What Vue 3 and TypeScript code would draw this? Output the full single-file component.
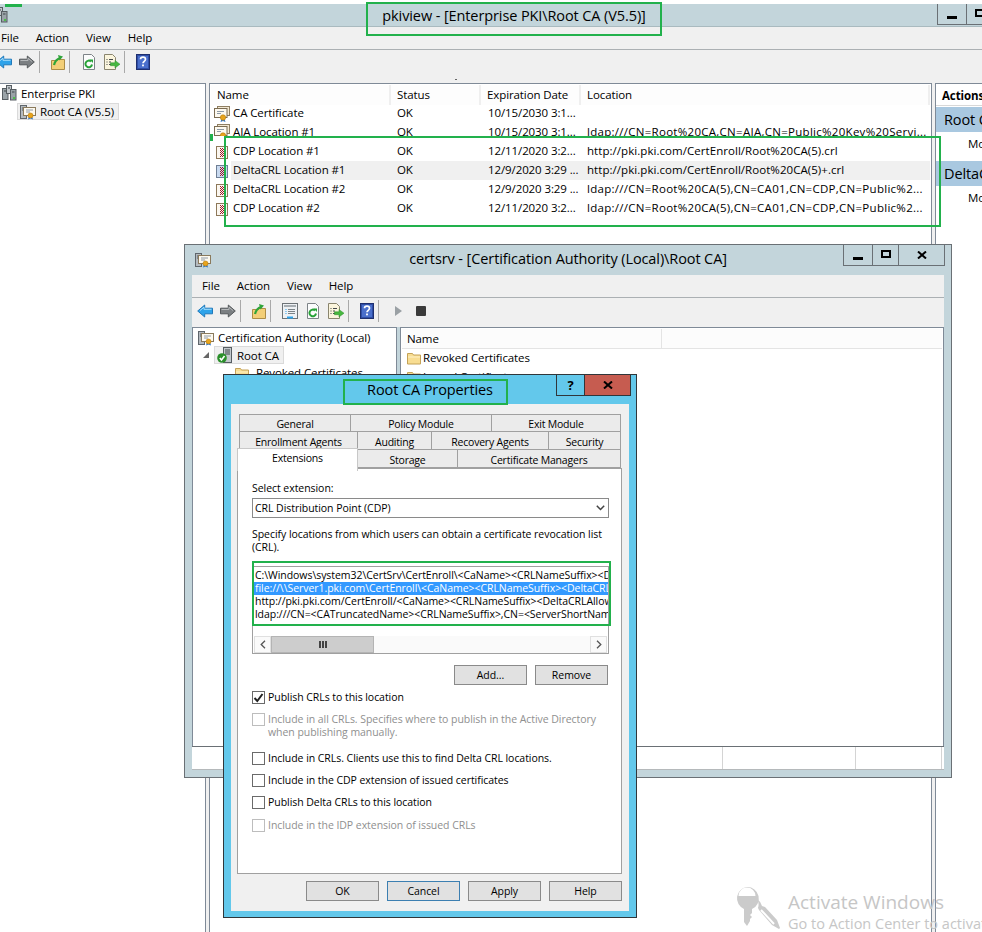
<template>
  <div class="desktop">
    <svg class="defs" width="0" height="0" aria-hidden="true">
      <symbol id="cert" viewBox="0 0 16 16">
        <rect x="3.5" y="0.5" width="12" height="9" fill="#f3e8d2" stroke="#8f7f62" />
        <rect x="0.5" y="2.5" width="12.5" height="9" fill="#fdf9ef" stroke="#7b6c52" />
        <path d="M3 5.5h7M3 7.5h4" stroke="#8e9aa6" />
        <path d="M7.5 13l-1 3 2.5-1 2.5 1-1-3z" fill="#2a74c9" />
        <circle cx="9" cy="11.5" r="2.7" fill="#e8a41c" stroke="#b97c0c" stroke-width="0.6" />
      </symbol>
      <symbol id="crl" viewBox="0 0 16 16">
        <rect x="2.5" y="2.5" width="11" height="12" fill="#fbf7f0" stroke="#8d7859" />
        <path d="M6.500 4v9M7.500 5v8M8.500 4v9M9.500 5v8" stroke="#a01828" stroke-dasharray="1 1" />
      </symbol>
      <symbol id="delta" viewBox="0 0 16 16">
        <rect x="2.5" y="2.5" width="11" height="12" fill="#c9daf0" stroke="#6f7f95" />
        <path d="M6.500 4v9M7.500 5v8M8.500 4v9M9.500 5v8" stroke="#a01828" stroke-dasharray="1 1" />
      </symbol>
      <symbol id="ca" viewBox="0 0 16 16">
        <rect x="0.5" y="1.5" width="6" height="13" fill="#b4babf" stroke="#5f666c" />
        <path d="M2 4h3M2 6h3" stroke="#4f565c" />
        <rect x="3.5" y="3.5" width="12" height="8" fill="#fdf9ef" stroke="#8a7a5c" />
        <path d="M6 6h7M6 8h4" stroke="#8e9aa6" />
        <path d="M9 12l-1 3.5 2.5-1 2.5 1-1-3.500z" fill="#2a74c9" />
        <circle cx="10.500" cy="11.500" r="2.500" fill="#e8a41c" stroke="#b97c0c" stroke-width="0.6" />
      </symbol>
      <symbol id="pki" viewBox="0 0 16 16">
        <rect x="1.500" y="3.500" width="5.500" height="11" fill="#9aa3a8" stroke="#565d62" />
        <rect x="5.500" y="0.500" width="5" height="8" fill="#c2c8cc" stroke="#565d62" />
        <rect x="9.500" y="4.500" width="5.500" height="10.500" fill="#9aa3a8" stroke="#565d62" />
        <path d="M3 6h2.500M11 7h2.500M7 3h2" stroke="#3f464b" />
        <rect x="12" y="12" width="2" height="2" fill="#4bc04b" />
      </symbol>
      <symbol id="ca-ok" viewBox="0 0 16 16">
        <rect x="6.500" y="0.500" width="8" height="15" fill="#c2c8cc" stroke="#565d62" />
        <path d="M8 3h5M8 5h5M8 7h5" stroke="#3f464b" />
        <circle cx="5" cy="11" r="4.800" fill="#2a8f2a" />
        <path d="M2.800 11l1.700 2 3-4" fill="none" stroke="#fff" stroke-width="1.600" />
      </symbol>
      <symbol id="folder" viewBox="0 0 16 16">
        <path d="M1.500 3.500v10.500h13v-9h-7l-1-1.500z" fill="#f8dd92" stroke="#c4a257" />
        <path d="M2 7h12" stroke="#fdf0c6" />
      </symbol>
      <symbol id="back" viewBox="0 0 16 16">
        <path d="M0.700 8l7-6v3.200h7.800v5.600H7.700V14z" fill="#2ea3ea" stroke="#2079ba" stroke-linejoin="round" />
        <path d="M3 7.500l4-3.300v2.100h7.500" fill="none" stroke="#a6dcfa" />
      </symbol>
      <symbol id="forward" viewBox="0 0 16 16">
        <path d="M15.300 8l-7-6v3.200H0.500v5.600h7.800V14z" fill="#7b7f82" stroke="#55595c" stroke-linejoin="round" />
        <path d="M1.500 6.500h7.500V4.200l4 3.300" fill="none" stroke="#b5b8ba" />
      </symbol>
      <symbol id="up" viewBox="0 0 14 16">
        <path d="M0.500 6.500v9h13v-10h-6l-1.500 1z" fill="#f3cf78" stroke="#ad8d47" />
        <path d="M3 11c1-4 3-6 6-7" fill="none" stroke="#2fa53a" stroke-width="2.200" />
        <path d="M7 1l5 1.500-3.500 4z" fill="#2fa53a" />
      </symbol>
      <symbol id="tree" viewBox="0 0 16 16">
        <rect x="0.500" y="0.500" width="15" height="15" fill="#eef1f4" stroke="#6d7377" />
        <rect x="2" y="2" width="12" height="2" fill="#a7adb2" />
        <path d="M3.500 6.500h1M3.500 8.500h1M3.500 10.500h1" stroke="#2ea3ea" />
        <path d="M6 6.500h7M6 8.500h7M6 10.500h7" stroke="#7c8388" />
        <rect x="5" y="13.500" width="6" height="2" fill="#2ea3ea" />
      </symbol>
      <symbol id="refresh" viewBox="0 0 16 16">
        <path d="M2.500 0.500h8l3 3v12h-11z" fill="#fbfcfc" stroke="#7d8387" />
        <path d="M11 10.500a3.300 3.300 0 1 1-1-3" fill="none" stroke="#27a238" stroke-width="2" />
        <path d="M8.500 5.500h3.500v3.500z" fill="#27a238" />
      </symbol>
      <symbol id="export" viewBox="0 0 16 16">
        <path d="M0.500 0.500h8l3 3v12h-11z" fill="#fbf5dd" stroke="#8a856e" />
        <path d="M2.500 5.500h1M5 5.500h4M2.500 8h1M5 8h2M2.500 10.500h1M5 10.500h2" stroke="#44484b" />
        <path d="M6.500 8.800h4.500V6.500l5 3.700-5 3.800v-2.300H6.500z" fill="#48b83f" stroke="#2d8e2c" stroke-width="0.500" />
      </symbol>
      <symbol id="help" viewBox="0 0 14 16">
        <rect x="0.500" y="0.500" width="13" height="15" fill="#2f4ea6" stroke="#1e2f70" />
        <rect x="2" y="2" width="10" height="12" fill="#4a6fcc" />
        <path d="M4.500 5.300c0-3 5-3 5 0 0 2-2.500 2-2.500 4" fill="none" stroke="#fff" stroke-width="1.700" />
        <rect x="6.100" y="10.500" width="1.800" height="1.800" fill="#fff" />
      </symbol>
      <symbol id="close" viewBox="0 0 10 8">
        <path d="M1 0.500l8 7M9 0.500l-8 7" stroke="#000" stroke-width="2" />
      </symbol>
    </svg>

    <!-- back window -->
    <section class="win win-pki">
      <header class="titlebar">
        <svg class="ic pki-win-icon"><use href="#pki" /></svg>
        <span class="title">pkiview - [Enterprise PKI\Root CA (V5.5)]</span>
        <div class="caption">
          <span class="cap cap-min"><i class="glyph-min"></i></span>
          <span class="cap cap-max"><i class="glyph-max"></i></span>
          <span class="cap cap-x"><svg width="10" height="8"><use href="#close" /></svg></span>
        </div>
      </header>
      <nav class="menubar">
        <span v-for="m in menus" :key="m">{{ m }}</span>
      </nav>
      <div class="toolbar">
        <div class="tb-group">
          <svg class="ic"><use href="#back" /></svg>
          <svg class="ic"><use href="#forward" /></svg>
        </div>
        <i class="tb-sep"></i>
        <svg class="ic-n"><use href="#up" /></svg>
        <i class="tb-sep"></i>
        <div class="tb-group">
          <svg class="ic"><use href="#refresh" /></svg>
          <svg class="ic"><use href="#export" /></svg>
        </div>
        <i class="tb-sep"></i>
        <svg class="ic-n"><use href="#help" /></svg>
      </div>
      <div class="panes">
        <div class="pane pki-tree">
          <div class="tree-row">
            <svg class="ic"><use href="#pki" /></svg>
            <span>Enterprise PKI</span>
          </div>
          <div class="tree-row tree-child">
            <span class="selected">
              <svg class="ic"><use href="#ca" /></svg>
              <span>Root CA (V5.5)</span>
            </span>
          </div>
        </div>
        <div class="pane pki-list">
          <div class="list-head">
            <span v-for="h in pkiColumns" :key="h">{{ h }}</span>
          </div>
          <div
            v-for="row in pkiRows"
            :key="row.name"
            class="list-row"
            :class="{ 'row-cut': row.cut, 'row-hi': row.hi }"
          >
            <svg class="ic"><use :href="'#' + row.icon" /></svg>
            <div class="list-cells">
              <span>{{ row.name }}</span>
              <span>OK</span>
              <span>{{ row.date }}</span>
              <span class="cell-loc" :class="{ 'cell-ldap': row.location.startsWith('ldap') }">{{ row.location }}</span>
            </div>
          </div>
        </div>
        <div class="pane pki-actions">
          <div class="actions-title">Actions</div>
          <div class="actions-group">Root CA (V5.5)</div>
          <div class="actions-item">More Actions</div>
          <div class="actions-group">DeltaCRL Location #1</div>
          <div class="actions-item">More Actions</div>
        </div>
      </div>
    </section>

    <i class="mark-dash"></i>
    <i class="mark-tick"></i>
    <i class="speck"></i>
    <div class="mark mark-title"></div>
    <div class="mark mark-rows"></div>

    <div class="activation">
      <svg class="key" width="46" height="46" viewBox="0 0 46 46">
        <path d="M12 1a11.500 11.500 0 0 1 5 22v4l-2 2 2 2-2 2v2l-3 5-3-4V23A11.500 11.500 0 0 1 12 1z" fill="#cbcbcb" />
        <path d="M3.500 10a8.500 8.500 0 0 1 17 0z" fill="#fff" />
        <path d="M22 13a11 11 0 0 1 1 9l1 2 13 15 7 4 1-1-3-8-12-13-3-1a12 12 0 0 0-5-7z" fill="#cbcbcb" />
        <path d="M26 24l13 14" stroke="#fff" stroke-width="2" />
      </svg>
      <div>
        <div class="act-big">Activate Windows</div>
        <div class="act-small">Go to Action Center to activate Windows.</div>
      </div>
    </div>

    <!-- certsrv console -->
    <section class="win win-cert">
      <header class="titlebar">
        <svg class="ic win-icon"><use href="#ca" /></svg>
        <span class="title">certsrv - [Certification Authority (Local)\Root CA]</span>
        <div class="caption">
          <span class="cap cap-min"><i class="glyph-min"></i></span>
          <span class="cap cap-max"><i class="glyph-max"></i></span>
          <span class="cap cap-x"><svg width="10" height="8"><use href="#close" /></svg></span>
        </div>
      </header>
      <nav class="menubar">
        <span v-for="m in menus" :key="m">{{ m }}</span>
      </nav>
      <div class="toolbar">
        <div class="tb-group">
          <svg class="ic"><use href="#back" /></svg>
          <svg class="ic"><use href="#forward" /></svg>
        </div>
        <i class="tb-sep"></i>
        <svg class="ic-n"><use href="#up" /></svg>
        <i class="tb-sep"></i>
        <div class="tb-group">
          <svg class="ic"><use href="#tree" /></svg>
          <svg class="ic"><use href="#refresh" /></svg>
          <svg class="ic"><use href="#export" /></svg>
        </div>
        <i class="tb-sep"></i>
        <svg class="ic-n"><use href="#help" /></svg>
        <i class="tb-sep"></i>
        <i class="play"></i>
        <i class="stop"></i>
      </div>
      <div class="panes">
        <div class="pane cert-tree">
          <div class="tree-row">
            <svg class="ic"><use href="#ca" /></svg>
            <span>Certification Authority (Local)</span>
          </div>
          <div class="tree-row tree-root">
            <i class="expander"></i>
            <span class="selected">
              <svg class="ic"><use href="#ca-ok" /></svg>
              <span>Root CA</span>
            </span>
          </div>
          <div class="tree-row tree-leaf">
            <svg class="ic"><use href="#folder" /></svg>
            <span>Revoked Certificates</span>
          </div>
        </div>
        <div class="pane cert-list">
          <div class="cert-head"><span class="cert-name">Name</span></div>
          <div class="cert-row">
            <svg class="ic"><use href="#folder" /></svg>
            <span>Revoked Certificates</span>
          </div>
          <div class="cert-row">
            <svg class="ic"><use href="#folder" /></svg>
            <span>Issued Certificates</span>
          </div>
        </div>
      </div>
      <footer class="statusbar">
        <i class="st st-a"></i>
        <i class="st st-b"></i>
        <i class="st st-c"></i>
      </footer>
    </section>

    <!-- properties dialog -->
    <section class="dialog">
      <header class="dlg-title">
        <span>Root CA Properties</span>
        <div class="dlg-caption">
          <span class="dlg-help">?</span>
          <span class="dlg-close"><svg width="10" height="8"><use href="#close" /></svg></span>
        </div>
      </header>
      <div class="dlg-body">
        <div class="tabs">
          <div v-for="(tabRow, i) in tabRows" :key="i" class="tab-row">
            <span
              v-for="t in tabRow"
              :key="t.label"
              class="tab"
              :class="{ 'tab-active': t.active }"
              :style="{ width: t.width + 'px' }"
            >{{ t.label }}</span>
          </div>
        </div>
        <div class="tab-panel">
          <div class="lbl">Select extension:</div>
          <div class="select">
            <span>CRL Distribution Point (CDP)</span>
            <svg width="9" height="6" viewBox="0 0 9 6"><path d="M0.800 0.800l3.700 3.700 3.700-3.700" fill="none" stroke="#444" stroke-width="1.500" /></svg>
          </div>
          <div class="lbl lbl-specify">Specify locations from which users can obtain a certificate revocation list (CRL).</div>
          <div class="loc-list">
            <div class="loc-rows">
              <div v-for="l in locations" :key="l.text" class="loc" :class="{ 'loc-sel': l.sel }">{{ l.text }}</div>
            </div>
            <div class="hscroll">
              <span class="sb-btn"><svg width="6" height="9" viewBox="0 0 6 9"><path d="M5 0.800L1.200 4.500 5 8.200" fill="none" stroke="#555" stroke-width="1.300" /></svg></span>
              <span class="sb-thumb"><i></i><i></i><i></i></span>
              <span class="sb-track"></span>
              <span class="sb-btn"><svg width="6" height="9" viewBox="0 0 6 9"><path d="M1 0.800L4.800 4.500 1 8.200" fill="none" stroke="#555" stroke-width="1.300" /></svg></span>
            </div>
          </div>
          <div class="loc-actions">
            <span class="btn">Add...</span>
            <span class="btn">Remove</span>
          </div>
          <div
            v-for="c in checks"
            :key="c.label"
            class="check"
            :class="{ 'check-off': c.disabled }"
            :style="{ marginTop: c.gap + 'px' }"
          >
            <span class="box">
              <svg v-if="c.checked" width="11" height="10" viewBox="0 0 11 10"><path d="M1.500 5l2.800 3 5.200-7" fill="none" stroke="#222" stroke-width="2" /></svg>
            </span>
            <span>{{ c.label }}</span>
          </div>
        </div>
        <div class="dlg-buttons">
          <span class="btn">OK</span>
          <span class="btn btn-focus">Cancel</span>
          <span class="btn">Apply</span>
          <span class="btn">Help</span>
        </div>
      </div>
    </section>

    <div class="mark mark-dialog"></div>
    <div class="mark mark-locs"></div>
  </div>
</template>

<script setup lang="ts">
interface PkiRow {
  name: string
  icon: 'cert' | 'crl' | 'delta'
  date: string
  location: string
  cut?: boolean
  hi?: boolean
}

interface Tab {
  label: string
  width: number
  active?: boolean
}

interface Check {
  label: string
  gap: number
  checked?: boolean
  disabled?: boolean
}

const menus = ['File', 'Action', 'View', 'Help']
const pkiColumns = ['Name', 'Status', 'Expiration Date', 'Location']

const ldapCdp = 'ldap:///CN=Root%20CA(5),CN=CA01,CN=CDP,CN=Public%2...'

const pkiRows: PkiRow[] = [
  { name: 'CA Certificate', icon: 'cert', date: '10/15/2030 3:1...', location: '' },
  {
    name: 'AIA Location #1',
    icon: 'cert',
    date: '10/15/2030 3:1...',
    location: 'ldap:///CN=Root%20CA,CN=AIA,CN=Public%20Key%20Servi...',
    cut: true
  },
  { name: 'CDP Location #1', icon: 'crl', date: '12/11/2020 3:2...', location: 'http://pki.pki.com/CertEnroll/Root%20CA(5).crl' },
  {
    name: 'DeltaCRL Location #1',
    icon: 'delta',
    date: '12/9/2020 3:29 ...',
    location: 'http://pki.pki.com/CertEnroll/Root%20CA(5)+.crl',
    hi: true
  },
  { name: 'DeltaCRL Location #2', icon: 'crl', date: '12/9/2020 3:29 ...', location: ldapCdp },
  { name: 'CDP Location #2', icon: 'crl', date: '12/11/2020 3:2...', location: ldapCdp }
]

const tabRows: Tab[][] = [
  [
    { label: 'General', width: 112 },
    { label: 'Policy Module', width: 141 },
    { label: 'Exit Module', width: 129 }
  ],
  [
    { label: 'Enrollment Agents', width: 119 },
    { label: 'Auditing', width: 74 },
    { label: 'Recovery Agents', width: 117 },
    { label: 'Security', width: 72 }
  ],
  [
    { label: 'Extensions', width: 121, active: true },
    { label: 'Storage', width: 100 },
    { label: 'Certificate Managers', width: 163 }
  ]
]

const locations = [
  { text: 'C:\\Windows\\system32\\CertSrv\\CertEnroll\\<CaName><CRLNameSuffix><DeltaCRLAllowed>.crl', sel: false },
  { text: 'file://\\\\Server1.pki.com\\CertEnroll\\<CaName><CRLNameSuffix><DeltaCRLAllowed>.crl', sel: true },
  { text: 'http://pki.pki.com/CertEnroll/<CaName><CRLNameSuffix><DeltaCRLAllowed>.crl', sel: false },
  { text: 'ldap:///CN=<CATruncatedName><CRLNameSuffix>,CN=<ServerShortName>,CN=CDP,CN=Public', sel: false }
]

const checks: Check[] = [
  { label: 'Publish CRLs to this location', gap: 6, checked: true },
  { label: 'Include in all CRLs. Specifies where to publish in the Active Directory when publishing manually.', gap: 9, disabled: true },
  { label: 'Include in CRLs. Clients use this to find Delta CRL locations.', gap: 13 },
  { label: 'Include in the CDP extension of issued certificates', gap: 9 },
  { label: 'Publish Delta CRLs to this location', gap: 9 },
  { label: 'Include in the IDP extension of issued CRLs', gap: 10, disabled: true }
]
</script>

<style scoped>
.desktop {
  position: relative;
  width: 982px;
  height: 932px;
  overflow: hidden;
  background: #fff;
  color: #000;
  font-family: "Open Sans", "Noto Sans", sans-serif;
  font-size: 11.5px;
  letter-spacing: -0.1px;
}

.defs {
  position: absolute;
}

.ic {
  flex: none;
  width: 16px;
  height: 16px;
  display: block;
}

.ic-n {
  flex: none;
  width: 14px;
  height: 16px;
  display: block;
}

/* windows */
.win {
  position: absolute;
  display: flex;
  flex-direction: column;
  box-sizing: border-box;
  background: #c3d5db;
  padding: 0 8px 8px;
}

.win-pki {
  left: -17px;
  top: 4px;
  width: 1062px;
  height: 960px;
  padding-bottom: 0;
  background: #f0f0f0;
}

.win-cert {
  left: 184px;
  top: 244px;
  width: 768px;
  height: 534px;
  border: 1px solid #6a7075;
  padding: 0 7px 7px;
}

.titlebar {
  position: relative;
  flex: none;
  display: flex;
  align-items: center;
  justify-content: center;
  margin: 0 -8px;
  background: #c3d5db;
  font-size: 14.5px;
}

.win-pki .titlebar {
  height: 22px;
  border-bottom: 1px solid #a9babf;
}

.win-cert .titlebar {
  height: 30px;
  padding-bottom: 4px;
  box-sizing: border-box;
  margin: 0 -7px;
}

.win-icon {
  position: absolute;
  left: 10px;
  top: 7px;
}

.pki-win-icon {
  position: absolute;
  left: 9px;
  top: 3px;
}

.caption {
  position: absolute;
  top: 0;
  right: 6px;
  display: flex;
  height: 20px;
  border: 1px solid #6a7075;
  border-top: 0;
}

.cap {
  display: flex;
  align-items: center;
  justify-content: center;
  box-sizing: border-box;
  height: 100%;
}

.cap + .cap {
  border-left: 1px solid #6a7075;
}

.cap-min {
  width: 28px;
}

.cap-max {
  width: 26px;
}

.cap-x {
  width: 46px;
}

.glyph-min {
  width: 10px;
  height: 3px;
  margin-top: 6px;
  background: #000;
}

.glyph-max {
  margin-top: -3px;
  border: 2px solid #000;
  box-sizing: content-box;
  height: 4px;
  width: 6px;
}

.menubar {
  flex: none;
  display: flex;
  gap: 17px;
  box-sizing: border-box;
  height: 23px;
  align-items: center;
  padding: 0 0 1px 10px;
  background: #f0f0f0;
  border-bottom: 1px solid #abb0b3;
}

.toolbar {
  flex: none;
  display: flex;
  align-items: center;
  box-sizing: border-box;
  height: 29px;
  padding: 0 0 3px 5px;
  background: #f0f0f0;
}

.win-pki .toolbar {
  height: 33px;
  padding-bottom: 9px;
}

.tb-group {
  display: flex;
  gap: 7px;
}

.tb-sep {
  flex: none;
  width: 1px;
  height: 22px;
  margin: 0 11px 0 4px;
  background: #a9a9a9;
}

.play {
  width: 0;
  height: 0;
  margin-left: 5px;
  border-left: 7px solid #9aa0a4;
  border-top: 5px solid transparent;
  border-bottom: 5px solid transparent;
}

.stop {
  width: 10px;
  height: 10px;
  margin-left: 14px;
  border-radius: 1px;
  background: #3a3a3a;
}

/* panes */
.panes {
  flex: 1;
  display: flex;
  gap: 3px;
  min-height: 0;
}

.pane {
  box-sizing: border-box;
  background: #fff;
  border: 1px solid #7f8a97;
  border-width: 1px 1px 0 1px;
  overflow: hidden;
}

.pki-tree {
  flex: none;
  width: 215px;
  padding-top: 1px;
  border-left: 0;
}

.pki-list {
  flex: none;
  width: 723px;
  padding: 1px;
}

.pki-actions {
  flex: 1;
}

.tree-row {
  display: flex;
  align-items: center;
  gap: 4px;
  height: 16px;
  white-space: nowrap;
  padding-left: 10px;
}

.tree-child {
  padding-left: 26px;
  height: 17px;
  margin-top: 2px;
}

.selected {
  display: inline-flex;
  align-items: center;
  gap: 4px;
  height: 18px;
  padding: 0 4px 0 2px;
  background: #f0f0f0;
  border: 1px solid #dadada;
  box-sizing: border-box;
}

.tree-child .selected {
  height: 17px;
}

.list-head {
  display: grid;
  grid-template-columns: 180px 90px 100px 1fr;
  height: 17px;
  border-bottom: 2px solid #efefef;
}

.list-head span {
  padding-left: 6px;
  line-height: 20px;
  border-right: 2px solid #efefef;
  background: #fdfdfd;
}

.list-row {
  display: flex;
  align-items: center;
  height: 19px;
  overflow: hidden;
  padding-left: 3px;
}

.list-row .ic {
  margin-right: 1px;
}

.row-cut {
  height: 13px;
  align-items: flex-start;
  margin-bottom: 6px;
}

.row-cut .ic {
  margin-top: 1px;
}

.list-cells {
  flex: 1;
  display: grid;
  grid-template-columns: 160px 90px 100px 1fr;
  height: 19px;
  line-height: 18px;
  white-space: nowrap;
}

.list-cells span {
  padding-left: 6px;
  overflow: hidden;
}

.list-cells span:first-child {
  padding-left: 2px;
}

.list-cells span:nth-child(3) {
  padding-left: 7px;
}

.list-cells .cell-loc {
  letter-spacing: 0.05px;
}

.list-cells .cell-ldap {
  letter-spacing: 0.28px;
}

.row-hi .list-cells {
  background: #f0f0f0;
}

.actions-title {
  height: 21px;
  line-height: 24px;
  padding-left: 6px;
  font-weight: 700;
  white-space: nowrap;
  border-bottom: 1px solid #d8d8d8;
}

.actions-group {
  height: 25px;
  line-height: 25px;
  margin-top: 1px;
  padding-left: 8px;
  white-space: nowrap;
  font-size: 14.5px;
  background: #a9c8e0;
}

.actions-item {
  height: 28px;
  line-height: 24px;
  padding-left: 32px;
  white-space: nowrap;
}

.cert-tree {
  flex: none;
  width: 205px;
  padding-top: 1px;
}

.cert-tree .tree-row {
  padding-left: 5px;
  height: 17px;
}

.cert-tree .tree-root {
  height: 18px;
  padding-left: 10px;
  gap: 5px;
}

.cert-tree .tree-leaf {
  padding-left: 41px;
  gap: 6px;
}

.expander {
  width: 0;
  height: 0;
  border-left: 6px solid transparent;
  border-bottom: 6px solid #666;
}

.cert-list {
  flex: 1;
  padding: 1px;
}

.cert-head {
  height: 19px;
  border-bottom: 1px solid #e4e4e4;
  background: #fcfcfc;
}

.cert-name {
  display: block;
  width: 260px;
  padding-left: 5px;
  box-sizing: border-box;
  line-height: 19px;
  border-right: 1px solid #e4e4e4;
}

.cert-row {
  display: flex;
  align-items: center;
  gap: 1px;
  box-sizing: border-box;
  height: 19px;
  padding: 0 0 2px 4px;
}

.statusbar {
  flex: none;
  display: flex;
  height: 22px;
  background: #fff;
  border-top: 1px solid #6a7075;
  border-bottom: 1px solid #b5b9bb;
}

.st {
  box-sizing: border-box;
  border-right: 1px solid #d4d4d4;
}

.st-a {
  width: 531px;
}

.st-b {
  width: 133px;
}

.st-c {
  width: 86px;
}

/* dialog */
.dialog {
  position: absolute;
  left: 223px;
  top: 374px;
  width: 414px;
  height: 544px;
  box-sizing: border-box;
  display: flex;
  flex-direction: column;
  background: #63c8eb;
  border: 1px solid #30363a;
  padding: 0 7px 6px;
}

.dlg-title {
  position: relative;
  flex: none;
  height: 29px;
  display: flex;
  align-items: center;
  justify-content: center;
  font-size: 14.5px;
}

.dlg-caption {
  position: absolute;
  top: 0;
  right: -2px;
  display: flex;
  height: 21px;
}

.dlg-help,
.dlg-close {
  display: flex;
  align-items: center;
  justify-content: center;
  box-sizing: border-box;
  border: 1px solid #30363a;
  border-top: 0;
}

.dlg-help {
  width: 28px;
  border-right: 0;
  font-weight: 700;
  font-size: 13px;
}

.dlg-close {
  width: 47px;
  background: #c65c50;
}

.dlg-body {
  flex: 1;
  display: flex;
  flex-direction: column;
  background: #f0f0f0;
  padding: 10px 7px 0 6px;
  font-size: 10.5px;
  letter-spacing: -0.05px;
}

.tabs {
  flex: none;
  letter-spacing: -0.2px;
}

.tab-row {
  display: flex;
  margin-left: 2px;
}

.tab-row + .tab-row .tab {
  border-top: 0;
  line-height: 20px;
}

.tab {
  box-sizing: border-box;
  height: 18px;
  line-height: 18px;
  text-align: center;
  background: #ebebeb;
  border: 1px solid #a0a0a0;
  white-space: nowrap;
}

.tab + .tab {
  border-left: 0;
}

.tab-row + .tab-row .tab-active {
  position: relative;
  z-index: 1;
  height: 23px;
  margin: -2px 0 -3px -2px;
  padding-bottom: 4px;
  line-height: 18px;
  background: #fff;
  border-top: 1px solid #c8c8c8;
  border-bottom: 0;
  border-color: #c8c8c8;
}

.tab-panel {
  flex: none;
  box-sizing: border-box;
  height: 406px;
  padding: 13px 12px 0 14px;
  background: #fff;
  border: 1px solid #a0a0a0;
}

.lbl {
  line-height: 13px;
}

.select {
  display: flex;
  align-items: center;
  justify-content: space-between;
  box-sizing: border-box;
  height: 20px;
  margin-top: 3px;
  padding: 0 3px 0 2px;
  background: #fff;
  border: 1px solid #8a8a8a;
}

.lbl-specify {
  margin-top: 10px;
}

.loc-list {
  box-sizing: border-box;
  display: flex;
  flex-direction: column;
  height: 88px;
  margin-top: 12px;
  border: 1px solid #a0a0a0;
}

.loc-rows {
  flex: 1;
  padding-top: 2px;
  overflow: hidden;
}

.loc {
  height: 13px;
  line-height: 13px;
  padding-left: 2px;
  white-space: nowrap;
  overflow: hidden;
}

.loc-sel {
  color: #fff;
  background: #3399ff;
}

.hscroll {
  flex: none;
  display: flex;
  height: 17px;
  margin: 0 1px;
  background: #fafafa;
}

.sb-btn {
  flex: none;
  width: 17px;
  display: flex;
  align-items: center;
  justify-content: center;
  box-sizing: border-box;
  border: 1px solid #e0e0e0;
}

.sb-thumb {
  flex: none;
  width: 103px;
  display: flex;
  align-items: center;
  justify-content: center;
  gap: 1px;
  box-sizing: border-box;
  background: #cdcdcd;
  border: 1px solid #b4b4b4;
}

.sb-thumb i {
  width: 2px;
  height: 7px;
  background: #444;
}

.sb-track {
  flex: 1;
}

.loc-actions {
  display: flex;
  justify-content: flex-end;
  gap: 8px;
  margin: 11px 1px 0 0;
}

.btn {
  box-sizing: border-box;
  width: 73px;
  height: 20px;
  line-height: 18px;
  text-align: center;
  background: #e1e1e1;
  border: 1px solid #8a8a8a;
}

.btn-focus {
  border-color: #3c7fb1;
}

.check {
  display: flex;
  gap: 3px;
  line-height: 13px;
}

.box {
  flex: none;
  display: flex;
  align-items: center;
  justify-content: center;
  box-sizing: border-box;
  width: 13px;
  height: 13px;
  background: #fff;
  border: 1px solid #6a6a6a;
}

.check-off {
  color: #8f8f8f;
}

.check-off .box {
  border-color: #bdbdbd;
}

.dlg-buttons {
  display: flex;
  justify-content: flex-end;
  gap: 8px;
  margin-top: 7px;
}

/* annotations drawn over the screenshot */
.mark {
  position: absolute;
  box-sizing: border-box;
  border: 2px solid #22b14c;
}

.mark-title {
  left: 366px;
  top: 2px;
  width: 296px;
  height: 34px;
}

.mark-rows {
  left: 224px;
  top: 136px;
  width: 717px;
  height: 91px;
}

.mark-dialog {
  left: 343px;
  top: 379px;
  width: 165px;
  height: 26px;
}

.mark-locs {
  left: 252px;
  top: 561px;
  width: 359px;
  height: 65px;
}

.mark-dash {
  position: absolute;
  left: 5px;
  top: 4px;
  z-index: 1;
  width: 17px;
  height: 3px;
  background: #22b14c;
}

.mark-tick {
  position: absolute;
  left: 210px;
  top: 134px;
  width: 3px;
  height: 7px;
  background: #22b14c;
}

.speck {
  position: absolute;
  left: 455px;
  top: 79px;
  width: 2px;
  height: 1px;
  background: #666;
}

.activation {
  position: absolute;
  left: 735px;
  top: 886px;
  display: flex;
  gap: 7px;
  white-space: nowrap;
  color: #c6c6c6;
}

.key {
  flex: none;
}

.act-big {
  margin-top: 4px;
  font-size: 19px;
  line-height: 24px;
  letter-spacing: 0;
}

.act-small {
  margin-top: 1px;
  font-size: 14.5px;
  line-height: 18px;
  letter-spacing: 0;
}
</style>
